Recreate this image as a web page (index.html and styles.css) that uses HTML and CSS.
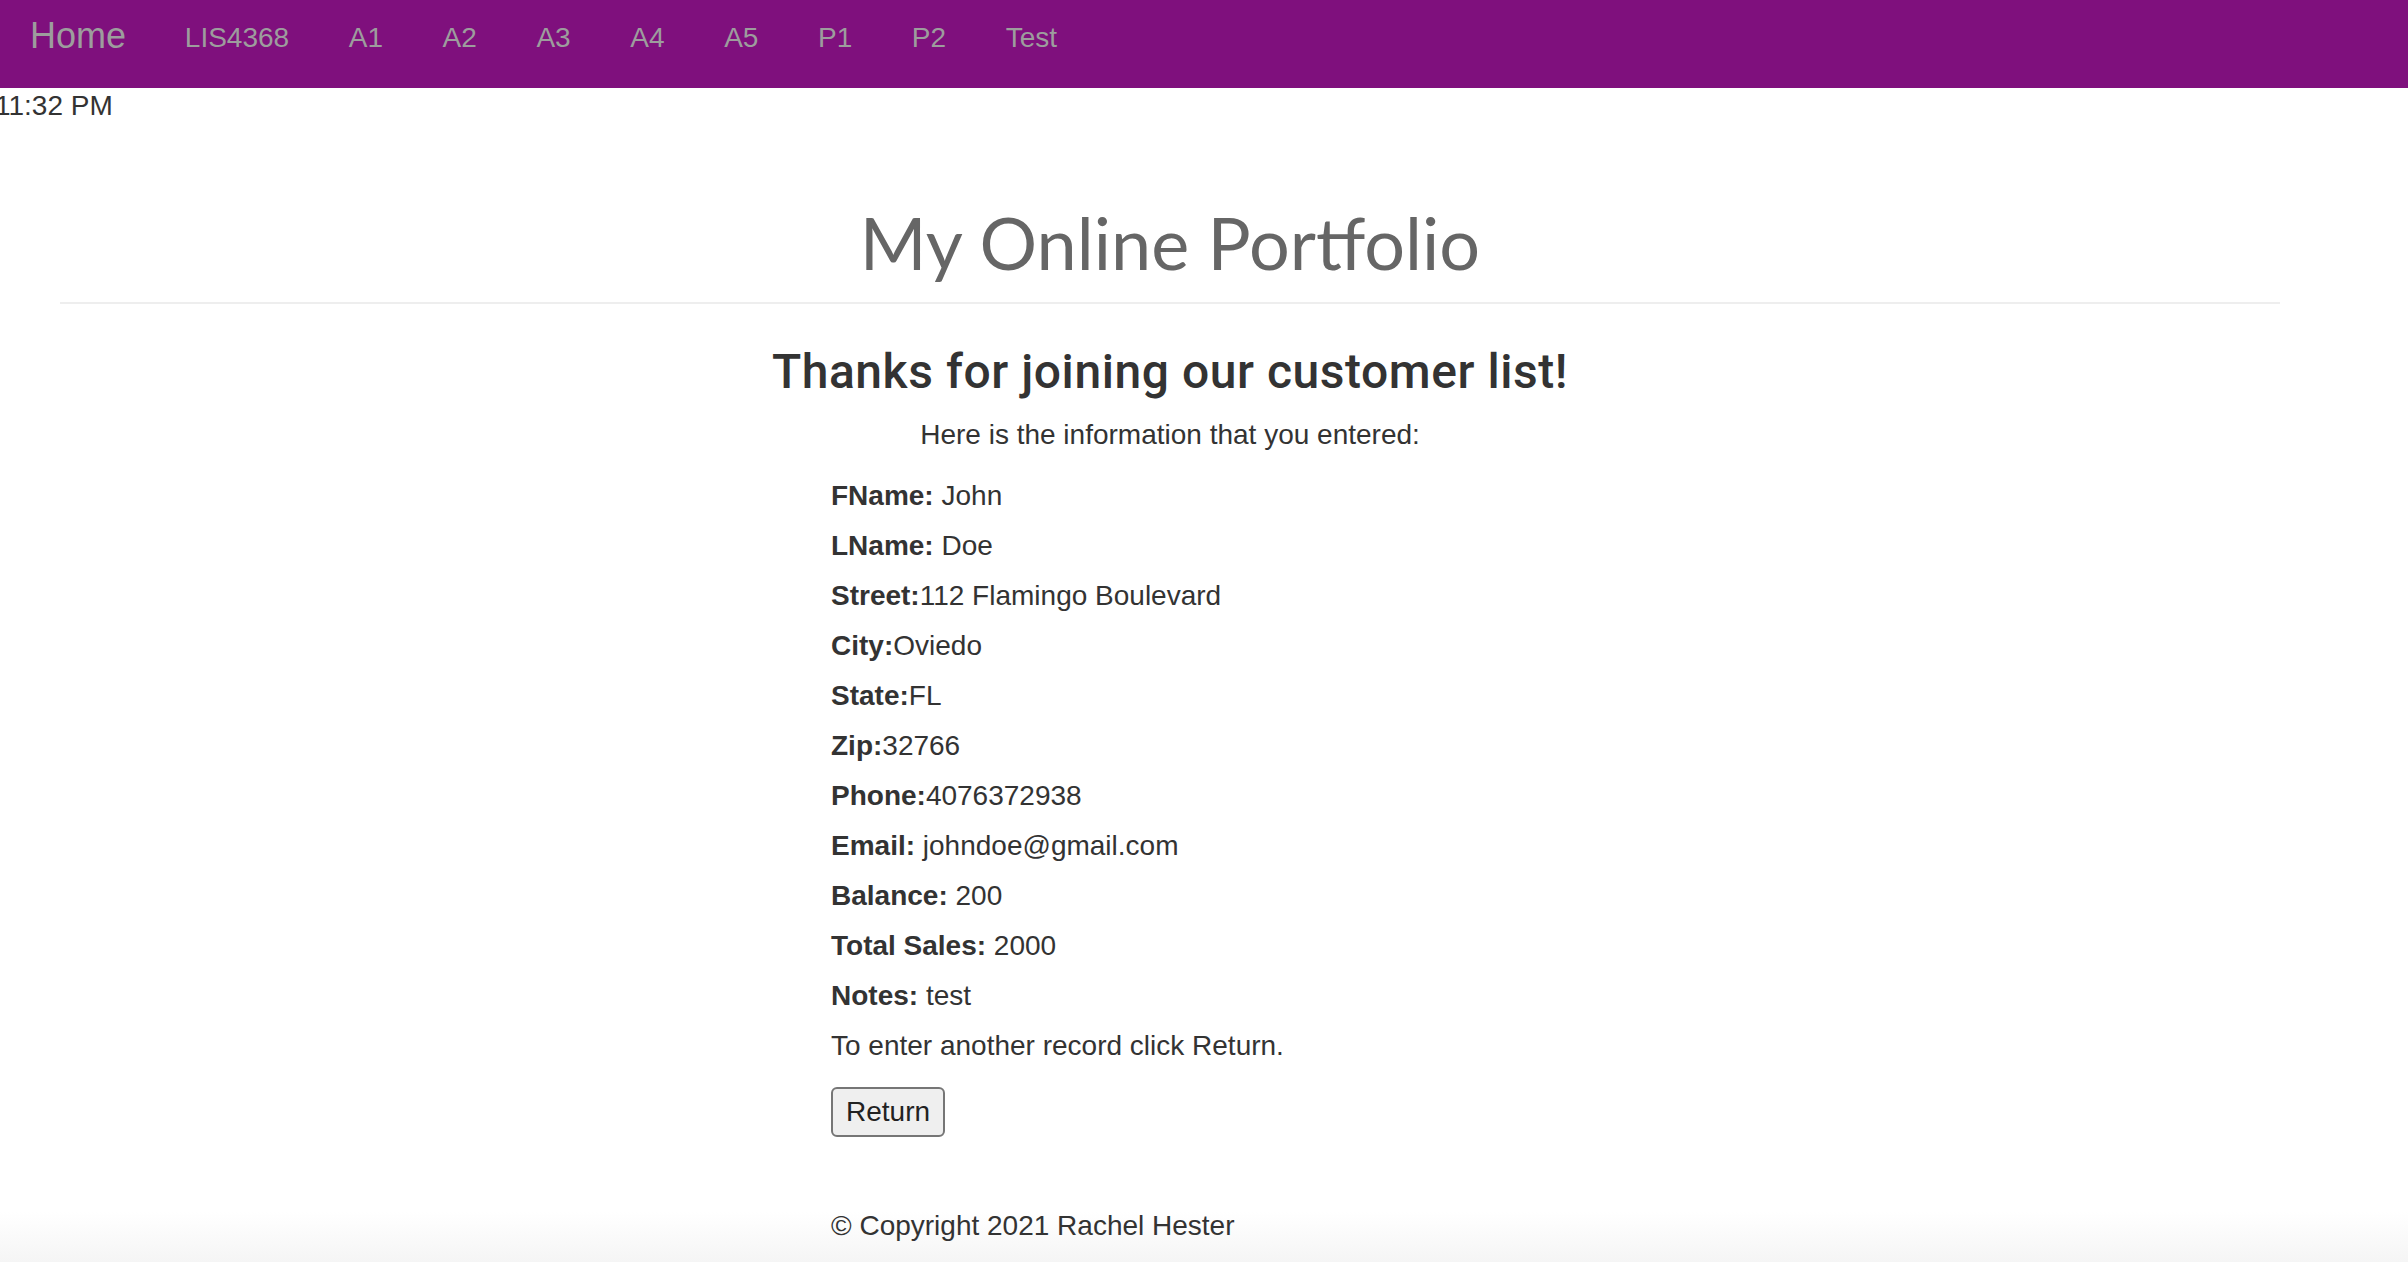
FILE: index.html
```html
<!DOCTYPE html>
<html lang="en">
<head>
<meta charset="utf-8">
<title>My Online Portfolio</title>
<link rel="stylesheet" href="styles.css">
</head>
<body>
<nav class="navbar">
  <a class="brand" href="#">Home</a>
  <a class="nav-link" href="#">LIS4368</a>
  <a class="nav-link" href="#">A1</a>
  <a class="nav-link" href="#">A2</a>
  <a class="nav-link" href="#">A3</a>
  <a class="nav-link" href="#">A4</a>
  <a class="nav-link" href="#">A5</a>
  <a class="nav-link" href="#">P1</a>
  <a class="nav-link" href="#">P2</a>
  <a class="nav-link" href="#">Test</a>
</nav>
<div class="clock">11:32 PM</div>
<main class="container">
  <header class="page-header">
    <h1 class="page-title">My Online Portfolio</h1>
  </header>
  <h2 class="thanks">Thanks for joining our customer list!</h2>
  <p class="intro">Here is the information that you entered:</p>
  <div class="column">
    <div class="records">
      <p class="row"><strong>FName:</strong> John</p>
      <p class="row"><strong>LName:</strong> Doe</p>
      <p class="row"><strong>Street:</strong>112 Flamingo Boulevard</p>
      <p class="row"><strong>City:</strong>Oviedo</p>
      <p class="row"><strong>State:</strong>FL</p>
      <p class="row"><strong>Zip:</strong>32766</p>
      <p class="row"><strong>Phone:</strong>4076372938</p>
      <p class="row"><strong>Email:</strong> johndoe@gmail.com</p>
      <p class="row"><strong>Balance:</strong> 200</p>
      <p class="row"><strong>Total Sales:</strong> 2000</p>
      <p class="row"><strong>Notes:</strong> test</p>
      <p class="row">To enter another record click Return.</p>
    </div>
    <button class="btn" type="button">Return</button>
    <footer class="footer">© Copyright 2021 Rachel Hester</footer>
  </div>
</main>
</body>
</html>
```
FILE: styles.css
```css
html {
  background: linear-gradient(to bottom, #ffffff 0, #ffffff 1212px, #f5f5f5 1262px) no-repeat;
  background-color: #f5f5f5;
  min-height: 1262px;
}
body {
  margin: 0;
  font-family: "Liberation Sans", Arial, Helvetica, sans-serif;
  font-size: 28px;
  line-height: 40px;
  color: #333333;
}
.navbar {
  display: flex;
  align-items: baseline;
  height: 88px;
  box-sizing: border-box;
  padding-top: 15px;
  background: #7f107d;
}
.navbar a {
  color: #9d9d9d;
  text-decoration: none;
}
.brand {
  font-size: 36px;
  margin-left: 30px;
  margin-right: 29px;
  position: relative;
  top: 1px;
}
.nav-link {
  padding: 0 29.8px;
  font-size: 28px;
}
.clock {
  margin-left: -5px;
  margin-top: -2px;
  height: 42px;
}
.container {
  margin-left: 60px;
  width: 2220px;
}
.page-header {
  margin-top: 74px;
  padding-bottom: 20px;
  border-bottom: 2px solid #eeeeee;
}
.page-title {
  margin: 0;
  text-align: center;
  font-family: "Lato", "DejaVu Sans", sans-serif;
  font-weight: 400;
  font-size: 72px;
  line-height: 80px;
  color: #666666;
}
.thanks {
  margin: 41px 0 0;
  text-align: center;
  font-family: "Roboto", "Liberation Sans", sans-serif;
  font-weight: 500;
  font-size: 48px;
  line-height: 53px;
  letter-spacing: 0.55px;
  color: #333333;
}
.intro {
  margin: 17px 0 0;
  text-align: center;
}
.column {
  width: 678px;
  margin: 0 auto;
}
.records {
  margin-top: 21px;
}
.row {
  margin: 0 0 10px;
}
.row strong {
  font-weight: 700;
}
.btn {
  display: block;
  margin-top: 21px;
  height: 50px;
  padding: 0 13px;
  font-family: "Liberation Sans", Arial, sans-serif;
  font-size: 28px;
  line-height: 46px;
  color: #222222;
  background: #efefef;
  border: 2px solid #767676;
  border-radius: 6px;
}
.footer {
  margin-top: 69px;
}
```
